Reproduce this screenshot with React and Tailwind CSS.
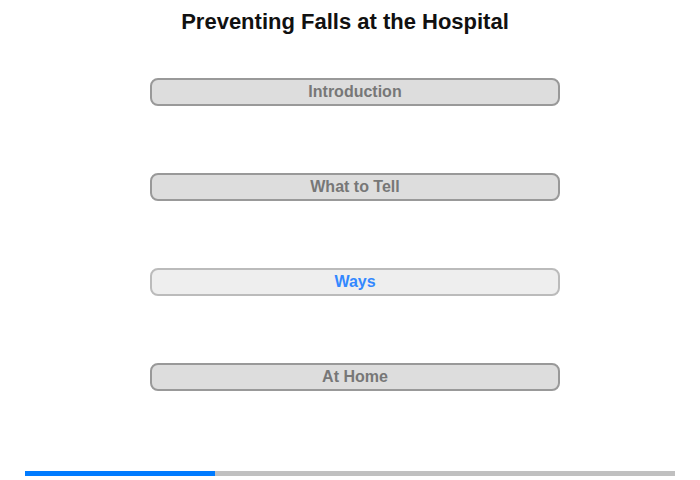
export default function App() {
  const items = [
    { label: "Introduction", active: false },
    { label: "What to Tell", active: false },
    { label: "Ways", active: true },
    { label: "At Home", active: false },
  ];
  return (
    <div className="w-[700px] h-[480px] bg-white relative" style={{ fontFamily: '"Liberation Sans", Arial, sans-serif' }}>
      <h1 className="pt-[9px] pr-[10px] text-center text-[22px] leading-[26px] font-bold text-[#111]">
        Preventing Falls at the Hospital
      </h1>
      <div className="flex flex-col items-center gap-[67px] pt-[43px]">
        {items.map((it) =>
          it.active ? (
            <div key={it.label} className="w-[410px] h-[28px] ml-[10px] rounded-[8px] border-2 border-[#bbbbbb] bg-[#eeeeee] flex items-center justify-center text-[16px] font-bold text-[#3388ff]">
              {it.label}
            </div>
          ) : (
            <div key={it.label} className="w-[410px] h-[28px] ml-[10px] rounded-[8px] border-2 border-[#999999] bg-[#dddddd] flex items-center justify-center text-[16px] font-bold text-[#777777]">
              {it.label}
            </div>
          )
        )}
      </div>
      <div className="absolute left-[25px] top-[471px] w-[650px] h-[5px] bg-[#c0c0c0] flex">
        <div className="w-[190px] h-full bg-[#007bff]" />
      </div>
    </div>
  );
}
